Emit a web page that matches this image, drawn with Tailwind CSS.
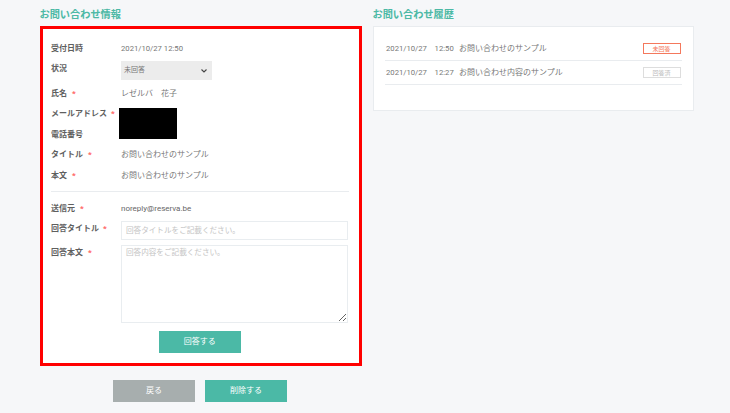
<!DOCTYPE html>
<html lang="ja">
<head>
  <meta charset="utf-8" />
  <title>お問い合わせ情報</title>
  <script src="https://cdn.jsdelivr.net/npm/@tailwindcss/browser@4"></script>
</head>
<body class="bg-[#f6f7f9] font-['Roboto','Noto_Sans_CJK_JP',sans-serif] text-[8px] text-[#777] overflow-hidden">
  <div class="w-[730px] h-[413px] pl-[40px] flex gap-[11px]">
    <div class="w-[322px]">
      <h2 class="h-[26px] pt-[8px] -ml-[0.5px] text-[10.2px] leading-[13px] font-bold text-[#4cb9a5]">お問い合わせ情報</h2>
      <form class="relative h-[340px] bg-white border-[3px] border-[#ff0000] pl-[8px] pr-[10px] pt-[10px]">
        <div class="flex items-center h-[20px]">
          <span class="w-[70px] font-bold text-[#5f5f5f]">受付日時</span><span class="text-[7.7px]">2021/10/27 12:50</span>
        </div>
        <div class="flex h-[20px] mt-[2px]">
          <span class="w-[70px] font-bold text-[#5f5f5f] leading-[16px]">状況</span>
          <div class="w-[91px] h-[19px] bg-[#ececec] flex items-center justify-between pl-[3px] pr-[5px]">
            <span class="text-[7px]">未回答</span>
            <svg width="6" height="4" viewBox="0 0 6 4" fill="none" stroke="#444" stroke-width="1.1"><path d="M0.5 0.5L3 3L5.5 0.5" /></svg>
          </div>
        </div>
        <div class="flex items-center h-[20.5px] mt-[2.5px]">
          <span class="w-[70px] font-bold text-[#5f5f5f]">氏名<b class="text-[#f66] ml-[5px]">*</b></span><span>レゼルバ　花子</span>
        </div>
        <div class="flex items-center h-[20.5px]">
          <span class="w-[70px] font-bold text-[#5f5f5f]">メールアドレス<b class="text-[#f66] ml-[4px]">*</b></span>
        </div>
        <div class="flex items-center h-[20.5px]">
          <span class="w-[70px] font-bold text-[#5f5f5f]">電話番号</span>
        </div>
        <div class="flex items-center h-[20.5px]">
          <span class="w-[70px] font-bold text-[#5f5f5f]">タイトル<b class="text-[#f66] ml-[5px]">*</b></span><span>お問い合わせのサンプル</span>
        </div>
        <div class="flex items-center h-[20.5px]">
          <span class="w-[70px] font-bold text-[#5f5f5f]">本文<b class="text-[#f66] ml-[5px]">*</b></span><span>お問い合わせのサンプル</span>
        </div>
        <div class="border-t border-[#e9ecef] mt-[4.5px]"></div>
        <div class="flex items-center h-[20px] mt-[7px]">
          <span class="w-[70px] font-bold text-[#5f5f5f]">送信元<b class="text-[#f66] ml-[5px]">*</b></span><span class="text-[#666]">noreply@reserva.be</span>
        </div>
        <div class="flex h-[19px] mt-[2px]">
          <span class="w-[70px] font-bold text-[#5f5f5f] leading-[15px]">回答タイトル<b class="text-[#f66] ml-[4px]">*</b></span>
          <input class="w-[227px] h-[19px] border border-[#e9edf0] px-[4px] text-[7.6px] placeholder:text-[#c4c4c4]" placeholder="回答タイトルをご記載ください。" />
        </div>
        <div class="flex mt-[5px]">
          <span class="w-[70px] font-bold text-[#5f5f5f] leading-[15px]">回答本文<b class="text-[#f66] ml-[5px]">*</b></span>
          <textarea class="block w-[227px] h-[78px] border border-[#e9edf0] px-[4px] py-0 text-[7.6px] leading-[14px] placeholder:text-[#c4c4c4]" placeholder="回答内容をご記載ください。"></textarea>
        </div>
        <div class="flex justify-center mt-[8px] -ml-[0.5px]">
          <button type="button" class="w-[82px] h-[22px] bg-[#4bb9a6] text-white text-[8px]">回答する</button>
        </div>
        <!-- redacted block -->
        <div class="absolute left-[76px] top-[79px] w-[58px] h-[31px] bg-black"></div>
      </form>
      <div class="flex gap-[10px] mt-[14px] ml-[73px]">
        <button type="button" class="w-[82px] h-[22px] bg-[#a7aeae] text-white text-[8px]">戻る</button>
        <button type="button" class="w-[82px] h-[22px] bg-[#4bb9a6] text-white text-[8px]">削除する</button>
      </div>
    </div>
    <div class="w-[321px]">
      <h2 class="h-[26px] pt-[8px] -ml-[0.5px] text-[10.2px] leading-[13px] font-bold text-[#4cb9a5]">お問い合わせ履歴</h2>
      <div class="h-[85px] bg-white border border-[#e9ecef] px-[11px] pt-[10px]">
        <div class="flex items-center h-[24px] border-b border-[#e9ecef] pl-[1px] pr-[1.5px]">
          <span class="w-[73px] text-[7.7px]">2021/10/27　12:50</span><span>お問い合わせのサンプル</span>
          <span class="ml-auto w-[38px] h-[11px] border border-[#f4785c] text-[#f4785c] text-[6px] leading-[9px] text-center">未回答</span>
        </div>
        <div class="flex items-center h-[24px] border-b border-[#e9ecef] pl-[1px] pr-[1.5px]">
          <span class="w-[73px] text-[7.7px]">2021/10/27　12:27</span><span>お問い合わせ内容のサンプル</span>
          <span class="ml-auto w-[38px] h-[11px] border border-[#ddd] text-[#bbb] text-[6px] leading-[9px] text-center">回答済</span>
        </div>
      </div>
    </div>
  </div>
</body>
</html>
